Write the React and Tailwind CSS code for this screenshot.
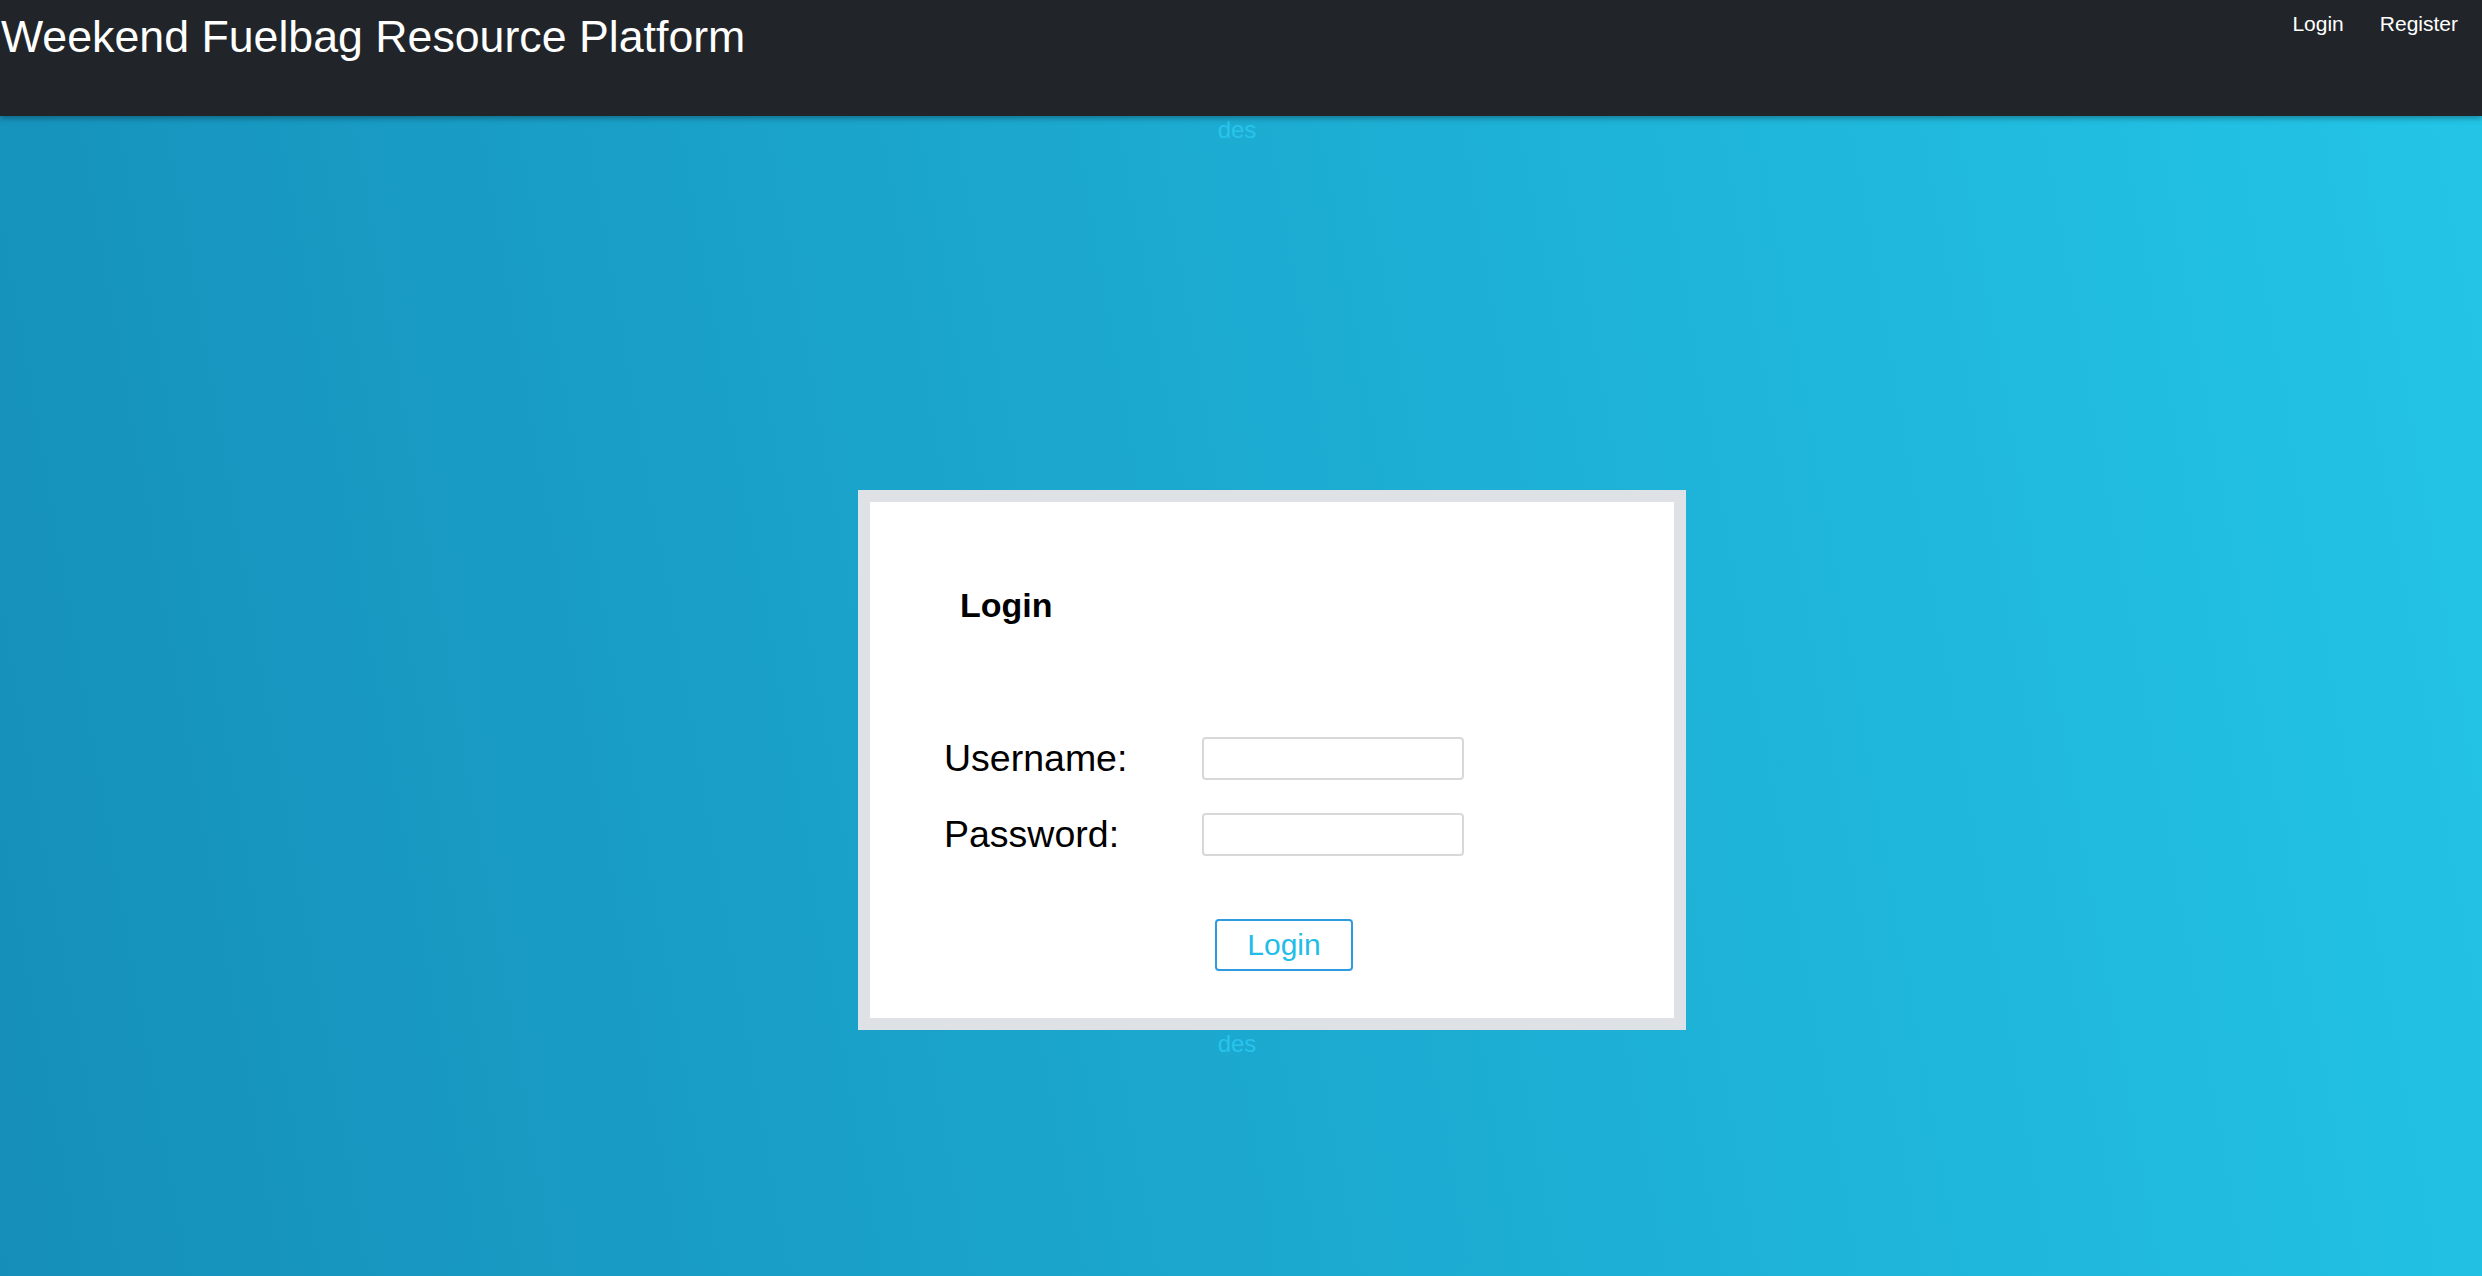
export default function App() {
  return (
    <div className="min-h-screen bg-[linear-gradient(80deg,#158fba,#23c5e7)] font-['Liberation_Sans',Arial,sans-serif]">
      <header className="relative z-10 flex h-[116px] items-start justify-between bg-[#212529] shadow-[0_2px_6px_rgba(0,0,0,0.35)]">
        <h1 className="pl-[1px] pt-[11px] text-[44.7px] font-normal leading-[1.15] text-white">
          Weekend Fuelbag Resource Platform
        </h1>
        <nav className="flex gap-[36px] pr-[24px] pt-[12px] text-[21px] leading-[1.15] text-white">
          <a href="#" className="text-white">Login</a>
          <a href="#" className="text-white">Register</a>
        </nav>
      </header>
      <main>
        <p className="pr-[8px] text-center text-[24px] leading-[1.15] text-[#28c4ec]">des</p>
        <div className="mt-[346px] flex justify-center pl-[62px]">
          <div className="w-[828px] border-[12px] border-[#dee2e6] bg-white">
            <div className="pb-[47px] pt-[84px]">
              <h2 className="pl-[90px] text-[34px] font-bold leading-[38px] text-black">Login</h2>
              <form className="mt-[113px] pl-[74px]" onSubmit={(e) => e.preventDefault()}>
                <div className="flex h-[43px] items-center">
                  <label className="w-[258px] text-[37.5px] leading-[1.15] text-black">Username:</label>
                  <input
                    type="text"
                    className="h-[43px] w-[262px] rounded-[4px] border-2 border-[#d8d8d8] bg-white px-2 outline-none"
                  />
                </div>
                <div className="mt-[33px] flex h-[43px] items-center">
                  <label className="w-[258px] text-[37.5px] leading-[1.15] text-black">Password:</label>
                  <input
                    type="password"
                    className="h-[43px] w-[262px] rounded-[4px] border-2 border-[#d8d8d8] bg-white px-2 outline-none"
                  />
                </div>
                <button
                  type="submit"
                  className="ml-[271px] mt-[63px] flex h-[52px] w-[138px] items-center justify-center rounded-[4px] border-2 border-[#2f9ae0] bg-white text-[30px] leading-none text-[#1fbde8]"
                >
                  Login
                </button>
              </form>
            </div>
          </div>
        </div>
        <p className="pr-[8px] text-center text-[24px] leading-[1.15] text-[#28c4ec]">des</p>
      </main>
    </div>
  );
}
